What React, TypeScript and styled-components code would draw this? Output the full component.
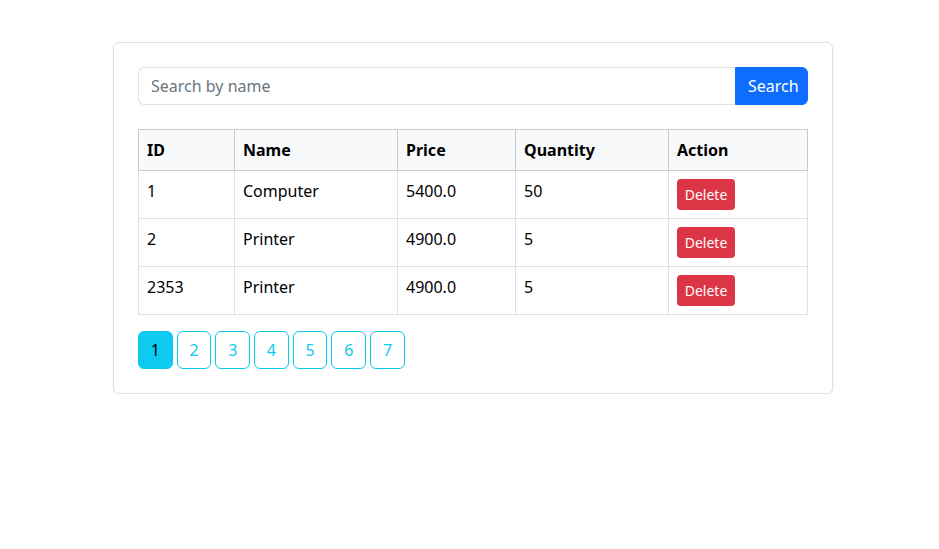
import React from "react";
import styled, { createGlobalStyle } from "styled-components";

type Product = {
  id: number;
  name: string;
  price: string;
  quantity: number;
};

const products: Product[] = [
  { id: 1, name: "Computer", price: "5400.0", quantity: 50 },
  { id: 2, name: "Printer", price: "4900.0", quantity: 5 },
  { id: 2353, name: "Printer", price: "4900.0", quantity: 5 },
];

const pages = [1, 2, 3, 4, 5, 6, 7];

const GlobalStyle = createGlobalStyle`
  body {
    margin: 0;
    background: #fff;
    color: #212529;
    font-family: "Noto Sans", "Open Sans", sans-serif;
    font-size: 16px;
    line-height: 1.5;
  }
  * {
    box-sizing: border-box;
  }
`;

export default function App() {
  return (
    <>
      <GlobalStyle />
      <Page>
        <Card>
          <SearchBar>
            <SearchInput placeholder="Search by name" />
            <SearchButton>Search</SearchButton>
          </SearchBar>

          <Table>
            <colgroup>
              <col style={{ width: 96 }} />
              <col style={{ width: 163 }} />
              <col style={{ width: 118 }} />
              <col style={{ width: 153 }} />
              <col style={{ width: 139 }} />
            </colgroup>
            <thead>
              <tr>
                <HeadCell>ID</HeadCell>
                <HeadCell>Name</HeadCell>
                <HeadCell>Price</HeadCell>
                <HeadCell>Quantity</HeadCell>
                <HeadCell>Action</HeadCell>
              </tr>
            </thead>
            <tbody>
              {products.map((p) => (
                <tr key={p.id}>
                  <Cell>{p.id}</Cell>
                  <Cell>{p.name}</Cell>
                  <Cell>{p.price}</Cell>
                  <Cell>{p.quantity}</Cell>
                  <Cell>
                    <DeleteButton>Delete</DeleteButton>
                  </Cell>
                </tr>
              ))}
            </tbody>
          </Table>

          <Pagination>
            {pages.map((n) => (
              <PageButton key={n} $active={n === 1}>
                {n}
              </PageButton>
            ))}
          </Pagination>
        </Card>
      </Page>
    </>
  );
}

const Page = styled.div`
  padding: 42px 0 0 113px;
`;

const Card = styled.div`
  width: 720px;
  padding: 24px;
  border: 1px solid #dee2e6;
  border-radius: 6px;
  background: #fff;
  box-shadow: 0 1px 3px rgba(0, 0, 0, 0.08);
`;

const SearchBar = styled.div`
  display: flex;
  margin-bottom: 24px;
`;

const SearchInput = styled.input`
  flex: 1;
  height: 38px;
  padding: 6px 12px;
  border: 1px solid #dee2e6;
  border-right: none;
  border-radius: 6px 0 0 6px;
  font: inherit;
  color: #212529;
  outline: none;

  &::placeholder {
    color: #6c757d;
  }
`;

const SearchButton = styled.button`
  height: 38px;
  width: 73px;
  padding: 0 12px;
  border: 1px solid #0d6efd;
  border-radius: 0 6px 6px 0;
  background: #0d6efd;
  color: #fff;
  font: inherit;
`;

const Table = styled.table`
  width: 100%;
  table-layout: fixed;
  border-collapse: collapse;
  margin-bottom: 16px;
`;

const HeadCell = styled.th`
  padding: 8px;
  text-align: left;
  font-weight: 700;
  color: #000;
  background: #f8f9fa;
  border: 1px solid #c8c9ca;
  line-height: 24px;
`;

const Cell = styled.td`
  padding: 8px;
  height: 48px;
  vertical-align: top;
  color: #000;
  border: 1px solid #dee2e6;
  line-height: 24px;
`;

const DeleteButton = styled.button`
  display: block;
  width: 58px;
  height: 31px;
  padding: 0;
  border: none;
  border-radius: 4px;
  background: #dc3545;
  color: #fff;
  font-family: inherit;
  font-size: 14px;
`;

const Pagination = styled.div`
  display: flex;
  gap: 4px;
`;

const PageButton = styled.button<{ $active?: boolean }>`
  width: 34.7px;
  height: 38px;
  padding: 0;
  border: 1px solid #0dcaf0;
  border-radius: 6px;
  background: ${(p) => (p.$active ? "#0dcaf0" : "#fff")};
  color: ${(p) => (p.$active ? "#000" : "#0dcaf0")};
  font-family: inherit;
  font-size: 16px;
`;
